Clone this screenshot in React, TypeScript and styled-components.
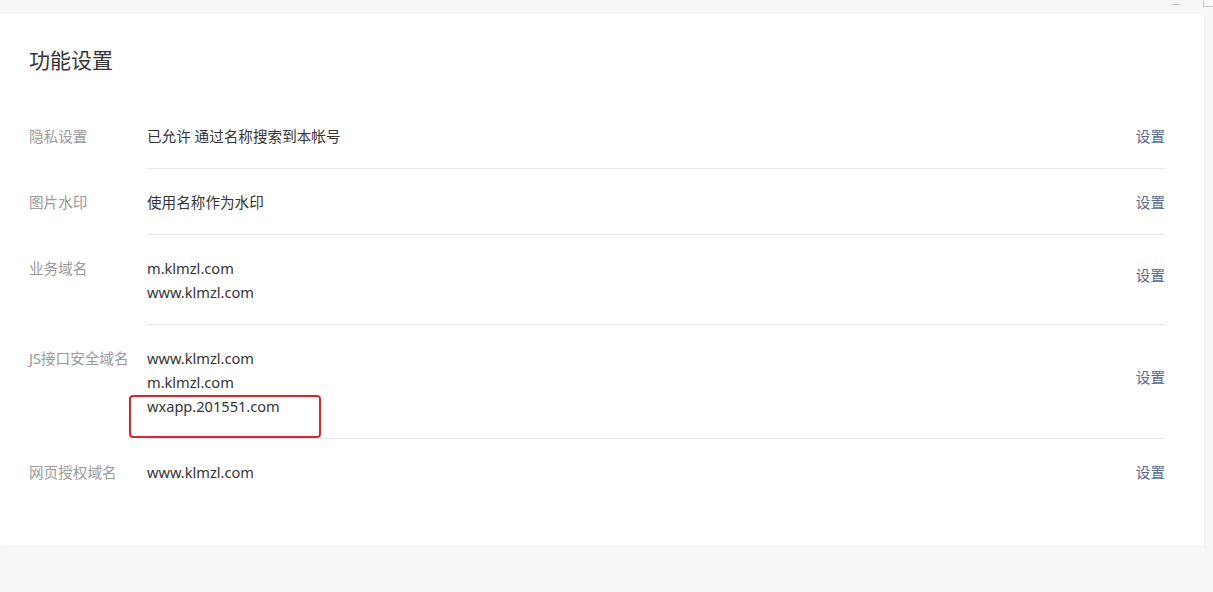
import React from 'react';
import styled, { createGlobalStyle } from 'styled-components';

const GlobalStyle = createGlobalStyle`
  html, body {
    margin: 0;
    padding: 0;
    background: #f6f7f8;
  }

  body {
    font-family: 'Noto Sans', 'Noto Sans CJK SC', sans-serif;
    color: #353535;
  }
`;

const Page = styled.div`
  width: 1213px;
  height: 592px;
  overflow: hidden;
  background: #f6f7f8;
`;

const WindowBar = styled.div`
  height: 14px;
  display: flex;
  justify-content: flex-end;
  align-items: flex-start;
  gap: 23px;
`;

const MinimizeGlyph = styled.span`
  width: 8px;
  height: 1px;
  margin-top: 4px;
  background: #c8c8c8;
`;

const MaximizeGlyph = styled.span`
  width: 10px;
  height: 7px;
  box-sizing: border-box;
  border-left: 1px solid #c8c8c8;
  border-bottom: 1px solid #c8c8c8;
`;

const Card = styled.div`
  width: 1204px;
  box-sizing: border-box;
  background: #ffffff;
  padding: 31px 39px 42px 29px;
  box-shadow: 1px 1px 2px rgba(0, 0, 0, 0.03);
`;

const Title = styled.h2`
  margin: 0 0 28px;
  font-size: 21px;
  line-height: 30px;
  font-weight: 400;
  color: #353535;
`;

const Row = styled.div`
  display: flex;
`;

const Label = styled.div`
  width: 118px;
  flex-shrink: 0;
  padding-top: 20.5px;
  height: 24px;
  font-size: 14.6px;
  line-height: 24px;
  color: #9a9a9a;
  white-space: nowrap;
`;

const Body = styled.div<{ $last?: boolean }>`
  flex: 1;
  display: flex;
  align-items: center;
  justify-content: space-between;
  padding: 20.5px 0;
  border-bottom: ${({ $last }) => ($last ? 'none' : '1px solid #e7e7eb')};
`;

const Values = styled.div`
  display: flex;
  flex-direction: column;
  font-size: 14.6px;
  line-height: 24px;
  color: #353535;
`;

const Value = styled.span`
  position: relative;
  display: block;
  height: 24px;
`;

const Marker = styled.span`
  position: absolute;
  left: -18px;
  top: 1px;
  width: 192px;
  height: 43px;
  box-sizing: border-box;
  border: 2.5px solid #d9282d;
  border-radius: 4px;
`;

const Action = styled.a<{ $lift?: boolean }>`
  display: block;
  height: 24px;
  margin-bottom: ${({ $lift }) => ($lift ? '10px' : '0')};
  font-size: 14.6px;
  line-height: 24px;
  color: #5a6a8c;
  text-decoration: none;
  cursor: pointer;
`;

type Item = {
  label: string;
  values: string[];
  marked?: number;
};

const items: Item[] = [
  { label: '隐私设置', values: ['已允许 通过名称搜索到本帐号'] },
  { label: '图片水印', values: ['使用名称作为水印'] },
  { label: '业务域名', values: ['m.klmzl.com', 'www.klmzl.com'] },
  {
    label: 'JS接口安全域名',
    values: ['www.klmzl.com', 'm.klmzl.com', 'wxapp.201551.com'],
    marked: 2,
  },
  { label: '网页授权域名', values: ['www.klmzl.com'] },
];

export default function App() {
  return (
    <Page>
      <GlobalStyle />
      <WindowBar>
        <MinimizeGlyph />
        <MaximizeGlyph />
      </WindowBar>
      <Card>
        <Title>功能设置</Title>
        {items.map((item, i) => (
          <Row key={item.label}>
            <Label>{item.label}</Label>
            <Body $last={i === items.length - 1}>
              <Values>
                {item.values.map((v, j) => (
                  <Value key={v}>
                    {v}
                    {item.marked === j && <Marker />}
                  </Value>
                ))}
              </Values>
              <Action $lift={item.values.length > 1}>设置</Action>
            </Body>
          </Row>
        ))}
      </Card>
    </Page>
  );
}
